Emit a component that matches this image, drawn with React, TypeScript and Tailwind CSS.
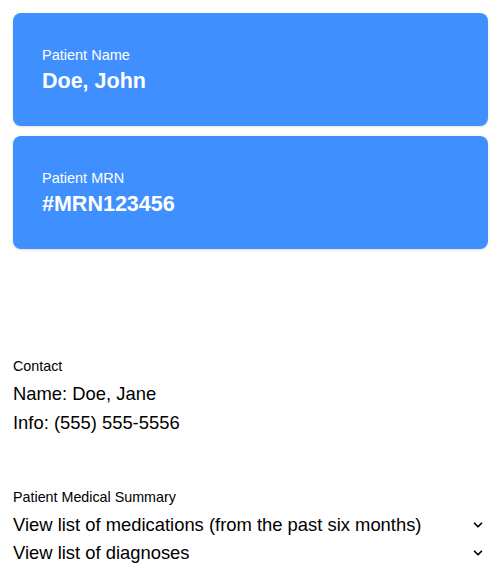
const font = { fontFamily: '"Liberation Sans", Arial, sans-serif' };

function InfoCard({ label, value }: { label: string; value: string }) {
  return (
    <div className="rounded-lg bg-[#3f90fe] pl-[29px] pr-[29px] pt-[32px] pb-[31px] text-white shadow-sm">
      <div className="text-[14.5px] leading-[20px]">{label}</div>
      <div className="mt-[2px] text-[21.5px] font-bold leading-[28px]">{value}</div>
    </div>
  );
}

function Chevron() {
  return (
    <svg width="12" height="12" viewBox="0 0 24 24" fill="none" stroke="black" strokeWidth="3.5" strokeLinecap="round" strokeLinejoin="round">
      <path d="M5 8.5l7 7 7-7" />
    </svg>
  );
}

export default function App() {
  return (
    <div className="min-h-screen bg-white pl-[13px] pr-[10px] pt-[13px] text-black" style={font}>
      <div className="flex flex-col gap-[10px]">
        <InfoCard label="Patient Name" value="Doe, John" />
        <InfoCard label="Patient MRN" value="#MRN123456" />
      </div>

      <section className="mt-[107px]">
        <div className="text-[14.3px] leading-[20px]">Contact</div>
        <div className="mt-[3px] text-[18.4px] leading-[29px]">
          <div>Name: Doe, Jane</div>
          <div>Info: (555) 555-5556</div>
        </div>
      </section>

      <section className="mt-[50px]">
        <div className="text-[14.3px] leading-[20px]">Patient Medical Summary</div>
        <div className="mt-[4px] text-[18.4px] leading-[28px]">
          <div className="flex items-center justify-between pr-[4px]">
            <span>View list of medications (from the past six months)</span>
            <Chevron />
          </div>
          <div className="flex items-center justify-between pr-[4px]">
            <span>View list of diagnoses</span>
            <Chevron />
          </div>
        </div>
      </section>
    </div>
  );
}
